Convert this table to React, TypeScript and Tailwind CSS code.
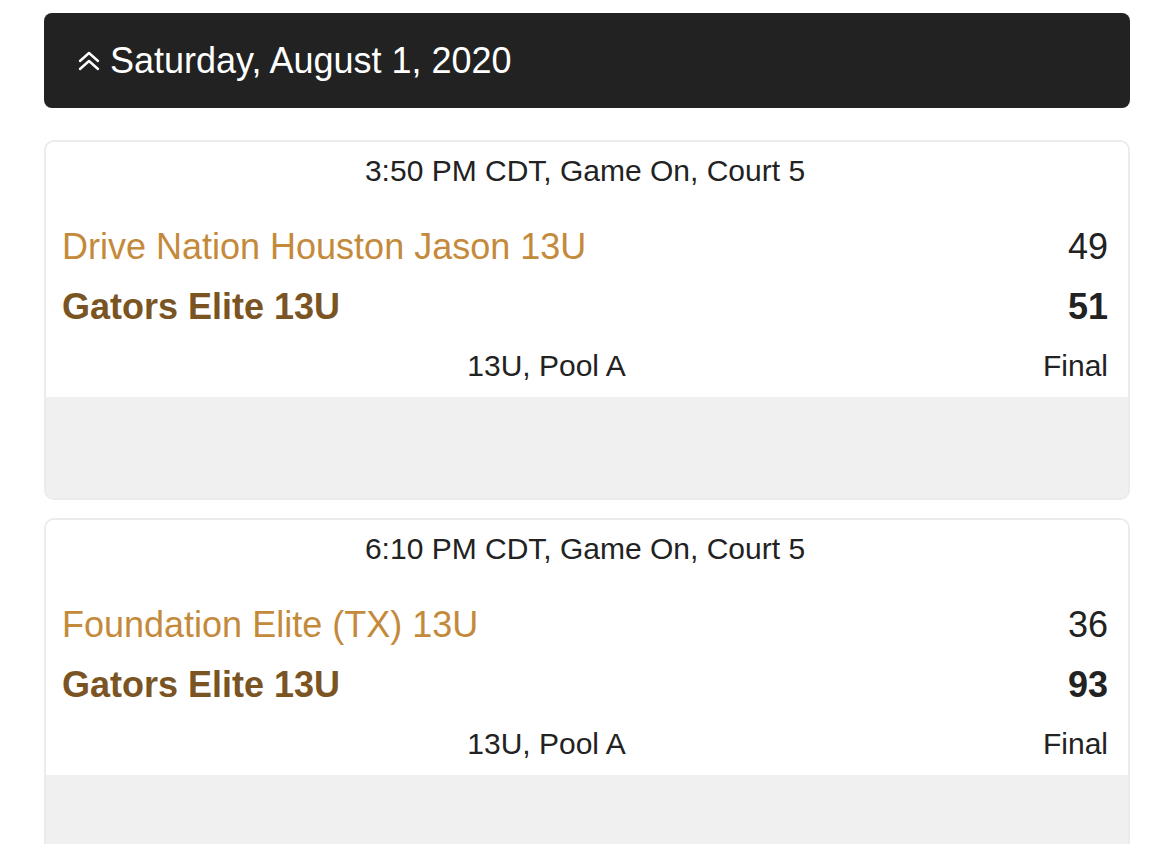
import React from "react";

type Game = {
  time: string;
  away: string;
  awayScore: number;
  home: string;
  homeScore: number;
  pool: string;
  status: string;
};

const games: Game[] = [
  {
    time: "3:50 PM CDT, Game On, Court 5",
    away: "Drive Nation Houston Jason 13U",
    awayScore: 49,
    home: "Gators Elite 13U",
    homeScore: 51,
    pool: "13U, Pool A",
    status: "Final",
  },
  {
    time: "6:10 PM CDT, Game On, Court 5",
    away: "Foundation Elite (TX) 13U",
    awayScore: 36,
    home: "Gators Elite 13U",
    homeScore: 93,
    pool: "13U, Pool A",
    status: "Final",
  },
];

function ChevronsUp() {
  return (
    <svg width="22" height="20" viewBox="0 0 22 20" fill="none" stroke="white" strokeWidth="2.4" strokeLinecap="round" strokeLinejoin="round">
      <path d="M2 10 L11 2 L20 10" />
      <path d="M2 18 L11 10 L20 18" />
    </svg>
  );
}

function GameCard({ game }: { game: Game }) {
  return (
    <div className="rounded-[10px] border-2 border-[#ebebeb] overflow-hidden">
      <div className="bg-white pt-[14px] pb-[16px] pl-4 pr-5">
        <div className="text-center text-[30px] leading-[30px] text-[#222]">{game.time}</div>
        <div className="mt-[31px]">
          <div className="flex items-center justify-between h-[60px]">
            <span className="text-[36px] text-[#c48a3c]">{game.away}</span>
            <span className="text-[36px] text-[#222]">{game.awayScore}</span>
          </div>
          <div className="flex items-center justify-between h-[60px]">
            <span className="text-[36px] font-bold text-[#7a5422]">{game.home}</span>
            <span className="text-[36px] font-bold text-[#222]">{game.homeScore}</span>
          </div>
        </div>
        <div className="mt-[14px] flex items-center gap-3 text-[30px] leading-[30px] text-[#222]">
          <div className="flex-1 text-center">{game.pool}</div>
          <div>{game.status}</div>
        </div>
      </div>
      <div className="bg-[#f0f0f0] h-[101px]"></div>
    </div>
  );
}

export default function App() {
  return (
    <div className="min-h-screen bg-white pt-[13px] pl-[44px] pr-[19px] font-[family-name:Liberation_Sans,Arial,sans-serif]">
      <div className="bg-[#222] rounded-lg h-[95px] flex items-center pl-[34px] gap-[10px]">
        <ChevronsUp />
        <span className="text-white text-[36px]">Saturday, August 1, 2020</span>
      </div>
      <div className="mt-[32px] flex flex-col gap-[18px]">
        {games.map((g, i) => (
          <GameCard key={i} game={g} />
        ))}
      </div>
    </div>
  );
}
